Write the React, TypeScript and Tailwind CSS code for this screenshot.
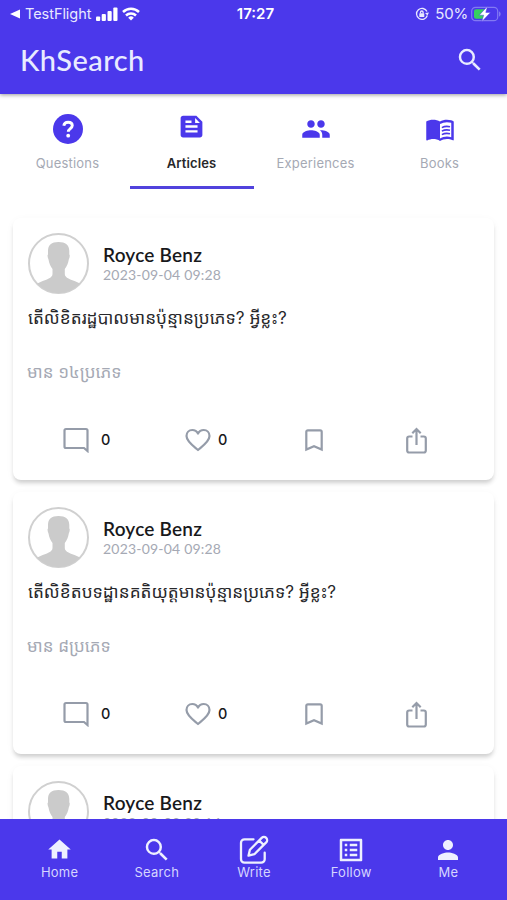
import { MdHome, MdListAlt, MdPeople, MdPerson, MdSearch, MdFeed } from 'react-icons/md';

type IconProps = { className?: string };

function QuestionIcon({ className }: IconProps) {
  return (
    <svg viewBox="0 0 30 30" className={className}>
      <circle cx="15" cy="15" r="15" fill="currentColor" />
      <path d="M10.800 11.800c.3-2.300 2-3.500 4.300-3.500 2.500 0 4.200 1.300 4.200 3.300 0 3-4 3-4 6.200" fill="none" stroke="#fff" strokeWidth="2.900" />
      <circle cx="15.200" cy="21.700" r="1.900" fill="#fff" />
    </svg>
  );
}

function BookIcon({ className }: IconProps) {
  return (
    <svg viewBox="0 0 24 24" className={className} fill="currentColor">
      <path d="M21 5c-1.110-.35-2.330-.5-3.500-.5-1.950 0-4.050.4-5.500 1.500-1.450-1.100-3.550-1.500-5.500-1.500S2.450 4.900 1 6v14.650c0 .25.25.5.5.5.1 0 .15-.05.25-.05C3.100 20.450 5.050 20 6.500 20c1.950 0 4.050.4 5.500 1.500 1.350-.85 3.800-1.500 5.500-1.500 1.650 0 3.350.3 4.750 1.050.1.05.15.05.25.05.25 0 .5-.25.5-.5V6c-.6-.45-1.250-.75-2-1zM21 18.500c-1.100-.35-2.300-.5-3.500-.5-1.700 0-4.150.65-5.500 1.500V8c1.350-.85 3.800-1.500 5.500-1.500 1.200 0 2.400.15 3.500.5z" />
      <path d="M13.500 10.900c1.600-.9 4.400-1.200 6.500-.7M13.500 13.700c1.600-.9 4.400-1.200 6.500-.7M13.500 16.500c1.600-.9 4.400-1.200 6.500-.7" fill="none" stroke="currentColor" strokeWidth="1.300" />
    </svg>
  );
}

function WriteIcon({ className }: IconProps) {
  return (
    <svg viewBox="0 0 30 30" className={className} fill="none" stroke="currentColor" strokeWidth="2.300" strokeLinecap="round" strokeLinejoin="round">
      <path d="M14.500 4.300H5.500a3.500 3.500 0 0 0-3.500 3.500v16.400a3.500 3.500 0 0 0 3.500 3.500h16.700a3.500 3.500 0 0 0 3.500-3.500v-6.500" />
      <path d="m9.500 20.700 1.400-6L22.700 2.900a3.100 3.100 0 0 1 4.500 4.500L15.400 19.200zM20.200 5.500l4.400 4.400" />
    </svg>
  );
}

const tabs = [
  { label: 'Questions', icon: QuestionIcon, size: 'size-[30px]' },
  { label: 'Articles', icon: MdFeed, size: 'size-[29px] -mt-1', active: true },
  { label: 'Experiences', icon: MdPeople, size: 'size-[30px]' },
  { label: 'Books', icon: BookIcon, size: 'size-[30px]' },
];

const navItems = [
  { label: 'Home', icon: MdHome, size: 'size-[27px]' },
  { label: 'Search', icon: MdSearch, size: 'size-[30px]' },
  { label: 'Write', icon: WriteIcon, size: 'size-[30px]' },
  { label: 'Follow', icon: MdListAlt, size: 'size-[30px]' },
  { label: 'Me', icon: MdPerson, size: 'size-[30px]' },
];

const articles = [
  {
    date: '2023-09-04 09:28',
    title: 'តើលិខិតរដ្ឋបាលមានប៉ុន្មានប្រភេទ? អ្វីខ្លះ?',
    excerpt: 'មាន ១៤ប្រភេទ',
  },
  {
    date: '2023-09-04 09:28',
    title: 'តើលិខិតបទដ្ឋានគតិយុត្តមានប៉ុន្មានប្រភេទ? អ្វីខ្លះ?',
    excerpt: 'មាន ៨ប្រភេទ',
  },
  { date: '2023-09-03 20:14' },
];

function StatusBar() {
  return (
    <div className="flex h-7 items-center justify-between pr-[6px] pl-[10px] text-[15px] text-[#e8e8ff]">
      <div className="flex w-[180px] items-center">
        <svg viewBox="0 0 10 10" className="size-[10px] fill-white">
          <path d="M0 5 10 .5v9z" />
        </svg>
        <span className="ml-[5px] text-[14.500px] tracking-[-0.05px]">TestFlight</span>
        <svg viewBox="0 0 22 14" className="ml-[5px] h-[14px] w-[22px] fill-white">
          <rect x="0" y="9.500" width="4.200" height="4.500" rx="1" />
          <rect x="5.700" y="7" width="4.200" height="7" rx="1" />
          <rect x="11.500" y="4" width="4.200" height="10" rx="1" />
          <rect x="17.300" y="0.500" width="4.200" height="13.500" rx="1" />
        </svg>
        <svg viewBox="0 0 18 14" className="ml-[4px] h-[14px] w-[18px] fill-none stroke-white stroke-[2.500]">
          <path d="M1 5a11.500 11.500 0 0 1 16 0M4 8.500a7.200 7.200 0 0 1 10 0" />
          <path d="M9 13.500 6.200 10.700a4 4 0 0 1 5.600 0z" className="fill-white stroke-none" />
        </svg>
      </div>
      <span className="font-semibold text-white">17:27</span>
      <div className="flex w-[180px] items-center justify-end">
        <svg viewBox="0 0 14 14" className="h-[14px] w-[14px] fill-none stroke-[#e8e8ff] stroke-[1.300]">
          <path d="M12 4.500A5.500 5.500 0 1 0 12.300 8.500" />
          <path d="m10 6 2.400 2.500L14 5.500z" className="fill-[#e8e8ff] stroke-none" />
          <rect x="4.300" y="6.300" width="5" height="3.700" rx=".6" className="fill-[#e8e8ff] stroke-none" />
          <path d="M5.500 6.500V5.300a1.300 1.300 0 0 1 2.600 0v1.200" />
        </svg>
        <span className="ml-[6px] tracking-[-0.2px]">50%</span>
        <svg viewBox="0 0 30 16" className="ml-[3px] h-4 w-[30px]">
          <rect x=".7" y="1.300" width="26" height="13.400" rx="3.800" fill="none" stroke="#8279f3" strokeWidth="1.200" />
          <path d="M28 5.500c2.200.5 2.200 4.500 0 5z" fill="#8279f3" />
          <path d="M5 3.300h9v9.400H5a2 2 0 0 1-2-2V5.300a2 2 0 0 1 2-2z" fill="#35cf5d" />
          <path d="M16.500.3 8.200 9.200h4.500l-2 6.500 8.800-9.300h-4.700z" fill="#fff" stroke="#4b38eb" strokeWidth=".5" />
        </svg>
      </div>
    </div>
  );
}

function Avatar() {
  return (
    <svg viewBox="0 0 62 62" className="size-[62px] shrink-0">
      <clipPath id="avatar-clip">
        <circle cx="31.500" cy="30.500" r="29.500" />
      </clipPath>
      <circle cx="31.500" cy="30.500" r="29.500" fill="#fff" stroke="#d0d0d0" strokeWidth="2" />
      <path
        clipPath="url(#avatar-clip)"
        fill="#cbcbcb"
        d="M31.500 9C38.500 9 42.300 12 42.300 18v3.500c.8.500.5 3-.5 5-.6 4-2 7-4 9.500v5c0 4 6 5.500 12 8 4 1.500 6 3 7.500 6V62H6v-7c1.500-3 3.500-4.500 7.500-6 6-2.500 12-4 12-8v-5c-2-2.500-3.400-5.500-4-9.500-1-2-1.300-4.500-.5-5V18c0-6 3.500-9 10.500-9z"
      />
    </svg>
  );
}

function CommentIcon() {
  return (
    <svg viewBox="0 0 26 26" className="size-[26px] fill-none stroke-current stroke-[2.200]">
      <path d="M24.500 24V3.500A1.500 1.500 0 0 0 23 2H3a1.500 1.500 0 0 0-1.500 1.500v16A1.500 1.500 0 0 0 3 21h18z" />
    </svg>
  );
}

function HeartIcon() {
  return (
    <svg viewBox="0 0 26 24" className="h-6 w-[26px] fill-none stroke-current stroke-[2.200]" strokeLinejoin="round">
      <path d="M13 22C9 18.500 1.500 13.500 1.500 8 1.500 4.500 4 2 7.300 2 9.700 2 11.800 3.200 13 5.500 14.200 3.200 16.300 2 18.700 2 22 2 24.500 4.500 24.500 8c0 5.500-7.500 10.500-11.500 14z" />
    </svg>
  );
}

function BookmarkIcon() {
  return (
    <svg viewBox="0 0 18 24" className="h-6 w-[18px] fill-none stroke-current stroke-[2.200]">
      <path d="M1.300 21.500V3.800a1.500 1.500 0 0 1 1.500-1.500h12.400a1.500 1.500 0 0 1 1.500 1.500v17.700L9 18.300z" />
    </svg>
  );
}

function ShareIcon() {
  return (
    <svg viewBox="0 0 21 27" className="h-[27px] w-[21px] fill-none stroke-current stroke-[2.200]">
      <path d="M6.500 9.500H3.200a2 2 0 0 0-2 2v12a2 2 0 0 0 2 2h14.600a2 2 0 0 0 2-2v-12a2 2 0 0 0-2-2h-3.300M10.500 18V2.500M6.300 6.200 10.500 2l4.200 4.200" />
    </svg>
  );
}

type Article = { date: string; title?: string; excerpt?: string };

function ArticleCard({ article }: { article: Article }) {
  return (
    <article className="h-[262px] shrink-0 rounded-lg bg-white px-[14px] pt-[15px] shadow-[0_4px_4px_-1px_rgba(0,0,0,0.17),0_2px_10px_-1px_rgba(0,0,0,0.05)]">
      <div className="flex items-start gap-[14px]">
        <Avatar />
        <div className="pt-[10px] font-['Lato']">
          <h2 className="text-[19px] leading-6 font-semibold tracking-[0.2px] text-[#18181b]">Royce Benz</h2>
          <p className="text-[14px] leading-4 tracking-[0.2px] text-[#a5a9b4]">{article.date}</p>
        </div>
      </div>
      {article.title && (
        <>
          <h3 className="mt-[7px] h-8 pl-px text-[17.200px] leading-8 whitespace-nowrap text-[#27272a]">
            {article.title}
          </h3>
          <p className="mt-[22px] h-8 text-[17px] leading-8 whitespace-nowrap text-[#a5a9b4]">{article.excerpt}</p>
          <div className="mt-[36px] flex h-8 items-center text-[#959ca9]">
            <div className="flex w-[123px] items-center gap-[12px] pl-[36px]">
              <CommentIcon />
              <span className="text-[14.500px] font-medium text-[#18181b]">0</span>
            </div>
            <div className="flex w-[122px] items-center gap-[7px] pl-[35px]">
              <HeartIcon />
              <span className="text-[14.500px] font-medium text-[#18181b]">0</span>
            </div>
            <div className="w-[134px] pl-[33px]">
              <BookmarkIcon />
            </div>
            <ShareIcon />
          </div>
        </>
      )}
    </article>
  );
}

export default function App() {
  return (
    <div className="flex h-[900px] w-[507px] flex-col overflow-hidden bg-white font-['Inter','Noto_Sans_Khmer','Noto_Sans',sans-serif]">
      <header className="z-10 h-[94px] shrink-0 bg-[#4b38eb] shadow-[0_1px_4px_rgba(0,0,0,0.4)]">
        <StatusBar />
        <div className="flex h-[64px] items-center justify-between pr-[22px] pl-[20px] text-[#e8ebff]">
          <h1 className="font-['Lato'] text-[29px] font-medium tracking-[0.45px]">KhSearch</h1>
          <MdSearch className="size-[30px]" />
        </div>
      </header>

      <nav className="flex h-[95px] shrink-0 px-[5.500px]">
        {tabs.map(({ label, icon: Icon, size, active }) => (
          <button
            key={label}
            className={`flex w-1/4 flex-col items-center border-b-[3px] pt-5 ${active ? 'border-[#5142dd]' : 'border-transparent'}`}
          >
            <span className="flex h-[29px] items-center text-[#4b38eb]">
              <Icon className={size} />
            </span>
            <span
              className={`mt-[11px] text-[13px] leading-[18px] ${active ? 'font-semibold tracking-[0.1px] text-[#27272a]' : 'tracking-[0.2px] text-[#a5a9b4]'}`}
            >
              {label}
            </span>
          </button>
        ))}
      </nav>

      <main className="flex min-h-0 flex-1 flex-col gap-[12px] overflow-hidden px-[13px] pt-[29px]">
        {articles.map((article, i) => (
          <ArticleCard key={i} article={article} />
        ))}
      </main>

      <footer className="z-10 flex h-[81px] shrink-0 bg-[#4b38eb] pr-[10px] pl-[11px] text-[#eef0ff]">
        {navItems.map(({ label, icon: Icon, size }) => (
          <button key={label} className="flex w-1/5 flex-col items-center pt-[16px]">
            <span className="flex h-[29px] items-center">
              <Icon className={size} />
            </span>
            <span className="text-[13px] leading-[16px] tracking-[0.25px] text-[#d6d5ff]">{label}</span>
          </button>
        ))}
      </footer>
    </div>
  );
}
